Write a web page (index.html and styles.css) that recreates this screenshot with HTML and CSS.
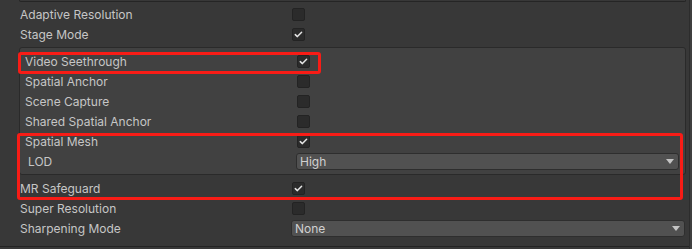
FILE: index.html
```html
<!DOCTYPE html>
<html>
<head>
<meta charset="utf-8">
<link rel="stylesheet" href="styles.css">
</head>
<body>
<div class="window">
  <div class="panel">
    <div class="topbox"></div>
    <div class="row first"><span class="label">Adaptive Resolution</span><span class="check"></span></div>
    <div class="row"><span class="label">Stage Mode</span><span class="check on"><svg viewBox="0 0 13 13" width="13" height="13"><polyline points="3.3,6.6 5.4,8.6 9.6,4.3"/></svg></span></div>
    <div class="group">
      <div class="row"><span class="label">Video Seethrough</span><span class="check on"><svg viewBox="0 0 13 13" width="13" height="13"><polyline points="3.3,6.6 5.4,8.6 9.6,4.3"/></svg></span></div>
      <div class="row"><span class="label">Spatial Anchor</span><span class="check"></span></div>
      <div class="row"><span class="label">Scene Capture</span><span class="check"></span></div>
      <div class="row"><span class="label">Shared Spatial Anchor</span><span class="check"></span></div>
      <div class="row"><span class="label">Spatial Mesh</span><span class="check on"><svg viewBox="0 0 13 13" width="13" height="13"><polyline points="3.3,6.6 5.4,8.6 9.6,4.3"/></svg></span></div>
      <div class="row"><span class="label sub">LOD</span><span class="dropdown"><span>High</span><svg class="arrow" viewBox="0 0 8 5" width="8" height="5"><polygon points="0,0 8,0 4,5"/></svg></span></div>
    </div>
    <div class="row after"><span class="label">MR Safeguard</span><span class="check on"><svg viewBox="0 0 13 13" width="13" height="13"><polyline points="3.3,6.6 5.4,8.6 9.6,4.3"/></svg></span></div>
    <div class="row"><span class="label">Super Resolution</span><span class="check"></span></div>
    <div class="row"><span class="label">Sharpening Mode</span><span class="dropdown"><span>None</span><svg class="arrow" viewBox="0 0 8 5" width="8" height="5"><polygon points="0,0 8,0 4,5"/></svg></span></div>
  </div>
  <div class="scrollbar"></div>
</div>
<div class="highlight h1"></div>
<div class="highlight h2"></div>
</body>
</html>
```
FILE: styles.css
```css
html, body {
  margin: 0;
  padding: 0;
}
body {
  width: 692px;
  height: 249px;
  background: #383838;
  font-family: Inter, "Noto Sans", sans-serif;
  font-size: 12px;
  color: #c6c6c6;
  position: relative;
  overflow: hidden;
}
.window {
  display: flex;
  height: 249px;
}
.panel {
  flex: 1;
  display: flex;
  flex-direction: column;
  padding: 0 3px 0 19px;
  height: 246px;
  border-bottom: 1px solid #242424;
}
.topbox {
  height: 1px;
  border: 1px solid #252525;
  border-top: none;
  border-radius: 0 0 3px 3px;
}
.row {
  display: flex;
  align-items: center;
  height: 18px;
  margin-top: 2px;
  padding-left: 1px;
  padding-right: 1px;
}
.row.first { margin-top: 3px; }
.row.after { margin-top: 4px; }
.label {
  width: 271px;
  flex: none;
  white-space: nowrap;
}
.label.sub {
  width: 268px;
  padding-left: 3px;
}
.check {
  width: 11px;
  height: 11px;
  margin-left: 1px;
  background: #2b2b2b;
  border: 1px solid #232323;
  border-radius: 2px;
  position: relative;
}
.check svg {
  position: absolute;
  left: -1px;
  top: -1px;
}
.check polyline {
  fill: none;
  stroke: #e4e4e4;
  stroke-width: 1.5;
  stroke-linecap: round;
  stroke-linejoin: round;
}
.group {
  margin-top: 4px;
  background: #414141;
  border: 1px solid #2a2a2a;
  border-radius: 3px;
  padding: 3px 5px 4px 4px;
  display: flex;
  flex-direction: column;
}
.group .row { margin-top: 2px; }
.group .row:first-child { margin-top: 1px; }
.dropdown {
  flex: 1;
  height: 15px;
  background: #515151;
  border: 1px solid #2e2e2e;
  border-radius: 3px;
  display: flex;
  align-items: center;
  justify-content: space-between;
  padding: 0 4px 0 3px;
  color: #d0d0d0;
}
.arrow polygon { fill: #c4c4c4; }
.scrollbar {
  width: 2px;
  border-left: 1px solid #2c2c2c;
  background: #3f3f3f;
}
.highlight {
  position: absolute;
  border: 3px solid #f81c16;
  border-radius: 3px;
  box-sizing: border-box;
}
.h1 { left: 18px; top: 52px; width: 303px; height: 22px; }
.h2 { left: 17px; top: 133px; width: 666px; height: 67px; }
```
